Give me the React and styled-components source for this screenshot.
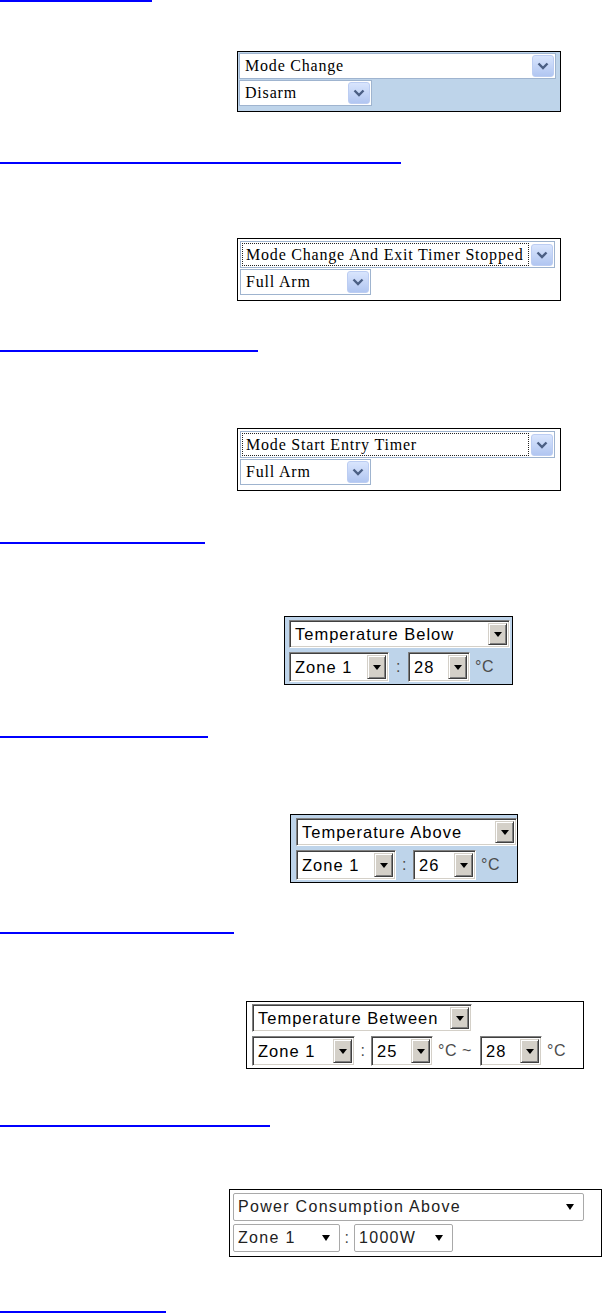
import React from 'react';
import styled, { createGlobalStyle, css } from 'styled-components';

const Global = createGlobalStyle`
  html, body { margin: 0; padding: 0; background: #fff; }
  body { width: 602px; height: 1313px; overflow: hidden; font-family: "Liberation Sans", Arial, sans-serif; }
`;

const Page = styled.div`
  display: flex;
  flex-direction: column;
  align-items: flex-start;
  width: 602px;
  height: 1313px;
`;

const LinkBar = styled.a`
  display: block;
  height: 3px;
  width: ${(p) => p.$w}px;
  margin-top: ${(p) => p.$mt}px;
  background: #0000ff;
`;

const Panel = styled.div`
  box-sizing: border-box;
  margin-top: ${(p) => p.$mt}px;
  margin-left: ${(p) => p.$ml}px;
  width: ${(p) => p.$w}px;
  border: 1px solid #000;
  background: ${(p) => (p.$blue ? '#bed4ea' : '#fff')};
  padding: ${(p) => p.$pad};
  display: flex;
  flex-direction: column;
  align-items: flex-start;
  gap: ${(p) => p.$gap}px;
`;

const Row = styled.div`
  display: flex;
  align-items: center;
`;

const Sep = styled.span`
  box-sizing: border-box;
  width: ${(p) => p.$w}px;
  padding-left: ${(p) => p.$pl || 0}px;
  text-align: ${(p) => (p.$pl ? 'left' : 'center')};
  font-family: "Liberation Sans", Arial, sans-serif;
  font-size: 16px;
  color: #4c4c4c;
  letter-spacing: 0.5px;
  white-space: nowrap;
`;

/* XP-style select (serif) */
const XPBox = styled.div`
  box-sizing: border-box;
  display: flex;
  align-items: center;
  width: ${(p) => p.$w}px;
  height: ${(p) => p.$h}px;
  background: #fff;
  border: 1px solid #9fb4cf;
  padding: 1px;
  font-family: "Liberation Serif", "Times New Roman", serif;
  font-size: 16px;
  letter-spacing: 0.8px;
  color: #000;
`;

const XPText = styled.span`
  box-sizing: border-box;
  flex: 1;
  height: 100%;
  display: flex;
  align-items: center;
  padding-left: 4px;
  margin-right: 2px;
  white-space: nowrap;
  ${(p) =>
    p.$focus &&
    css`
      outline: 1px dotted #222;
      outline-offset: -1px;
    `}
`;

const XPButton = styled.span`
  box-sizing: border-box;
  flex: none;
  width: 22px;
  height: 22px;
  border-radius: 3px;
  border: 1px solid #bccdf2;
  background: linear-gradient(#d9e5fd, #b1c6f1);
  display: flex;
  align-items: center;
  justify-content: center;
`;

/* Classic (Windows 2000) select */
const ClassicBox = styled.div`
  box-sizing: border-box;
  display: flex;
  align-items: stretch;
  width: ${(p) => p.$w}px;
  height: ${(p) => p.$h}px;
  background: #fff;
  border: 1px solid;
  border-color: #808080 #fff #fff #808080;
  box-shadow: inset 1px 1px 0 #404040, inset -1px -1px 0 #d4d0c8;
  padding: 2px;
  font-family: "Liberation Sans", Arial, sans-serif;
  font-size: 16.5px;
  letter-spacing: 1px;
  color: #000;
`;

const ClassicText = styled.span`
  flex: 1;
  display: flex;
  align-items: center;
  padding-left: 3px;
  white-space: nowrap;
`;

const ClassicButton = styled.span`
  box-sizing: border-box;
  flex: none;
  width: 19px;
  background: #d4d0c8;
  border: 1px solid;
  border-color: #d4d0c8 #404040 #404040 #d4d0c8;
  box-shadow: inset 1px 1px 0 #fff, inset -1px -1px 0 #808080;
  display: flex;
  align-items: center;
  justify-content: center;
`;

const Tri = styled.span`
  width: 0;
  height: 0;
  border-left: ${(p) => p.$s}px solid transparent;
  border-right: ${(p) => p.$s}px solid transparent;
  border-top: ${(p) => p.$t}px solid #000;
`;

/* Flat select */
const FlatBox = styled.div`
  box-sizing: border-box;
  display: flex;
  align-items: center;
  justify-content: space-between;
  width: ${(p) => p.$w}px;
  height: ${(p) => p.$h}px;
  background: #fff;
  border: 1px solid #a9a9a9;
  border-radius: 2px;
  padding: 0 9px 0 4px;
  font-family: "Liberation Sans", Arial, sans-serif;
  font-size: 16px;
  letter-spacing: 1.3px;
  color: #222;
  white-space: nowrap;
`;

const Chevron = () => (
  <svg width="12" height="8" viewBox="0 0 12 8">
    <polyline points="1.5,1.5 6,6 10.5,1.5" fill="none" stroke="#4b5f84" strokeWidth="2.4" />
  </svg>
);

const XPSelect = ({ w, h, focus, children }) => (
  <XPBox $w={w} $h={h}>
    <XPText $focus={focus}>{children}</XPText>
    <XPButton>
      <Chevron />
    </XPButton>
  </XPBox>
);

const ClassicSelect = ({ w, h, children }) => (
  <ClassicBox $w={w} $h={h}>
    <ClassicText>{children}</ClassicText>
    <ClassicButton>
      <Tri $s={4} $t={5} />
    </ClassicButton>
  </ClassicBox>
);

const FlatSelect = ({ w, h, children }) => (
  <FlatBox $w={w} $h={h}>
    <span>{children}</span>
    <Tri $s={4} $t={6} />
  </FlatBox>
);

export default function App() {
  return (
    <>
      <Global />
      <Page>
        <LinkBar href="#" $w={152} $mt={0} />
        <Panel $mt={49} $ml={237} $w={324} $blue $pad="1px 5px 5px 1px" $gap={1}>
          <XPSelect w={317} h={26}>Mode Change</XPSelect>
          <XPSelect w={133} h={26}>Disarm</XPSelect>
        </Panel>

        <LinkBar href="#" $w={401} $mt={50} />
        <Panel $mt={74} $ml={237} $w={324} $pad="2px 5px 5px 2px" $gap={1}>
          <XPSelect w={315} h={27} focus>Mode Change And Exit Timer Stopped</XPSelect>
          <XPSelect w={131} h={26}>Full Arm</XPSelect>
        </Panel>

        <LinkBar href="#" $w={258} $mt={49} />
        <Panel $mt={76} $ml={237} $w={324} $pad="2px 5px 5px 2px" $gap={1}>
          <XPSelect w={315} h={27} focus>Mode Start Entry Timer</XPSelect>
          <XPSelect w={131} h={26}>Full Arm</XPSelect>
        </Panel>

        <LinkBar href="#" $w={205} $mt={51} />
        <Panel $mt={72} $ml={284} $w={229} $blue $pad="3px 2px 2px 4px" $gap={4}>
          <ClassicSelect w={221} h={28}>Temperature Below</ClassicSelect>
          <Row>
            <ClassicSelect w={100} h={30}>Zone 1</ClassicSelect>
            <Sep $w={19}>:</Sep>
            <ClassicSelect w={62} h={30}>28</ClassicSelect>
            <Sep $w={30} $pl={5}>°C</Sep>
          </Row>
        </Panel>

        <LinkBar href="#" $w={208} $mt={51} />
        <Panel $mt={76} $ml={290} $w={228} $blue $pad="3px 2px 2px 5px" $gap={4}>
          <ClassicSelect w={221} h={28}>Temperature Above</ClassicSelect>
          <Row>
            <ClassicSelect w={100} h={30}>Zone 1</ClassicSelect>
            <Sep $w={17}>:</Sep>
            <ClassicSelect w={63} h={30}>26</ClassicSelect>
            <Sep $w={30} $pl={5}>°C</Sep>
          </Row>
        </Panel>

        <LinkBar href="#" $w={234} $mt={49} />
        <Panel $mt={67} $ml={246} $w={338} $pad="2px 2px 2px 5px" $gap={4}>
          <ClassicSelect w={220} h={28}>Temperature Between</ClassicSelect>
          <Row>
            <ClassicSelect w={103} h={30}>Zone 1</ClassicSelect>
            <Sep $w={16}>:</Sep>
            <ClassicSelect w={62} h={30}>25</ClassicSelect>
            <Sep $w={47} $pl={5}>°C ~</Sep>
            <ClassicSelect w={62} h={30}>28</ClassicSelect>
            <Sep $w={30} $pl={5}>°C</Sep>
          </Row>
        </Panel>

        <LinkBar href="#" $w={270} $mt={56} />
        <Panel $mt={62} $ml={229} $w={373} $pad="3px 2px 4px 3px" $gap={3}>
          <FlatSelect w={351} h={28}>Power Consumption Above</FlatSelect>
          <Row>
            <FlatSelect w={107} h={28}>Zone 1</FlatSelect>
            <Sep $w={14}>:</Sep>
            <FlatSelect w={99} h={28}>1000W</FlatSelect>
          </Row>
        </Panel>

        <LinkBar href="#" $w={166} $mt={54} />
      </Page>
    </>
  );
}
